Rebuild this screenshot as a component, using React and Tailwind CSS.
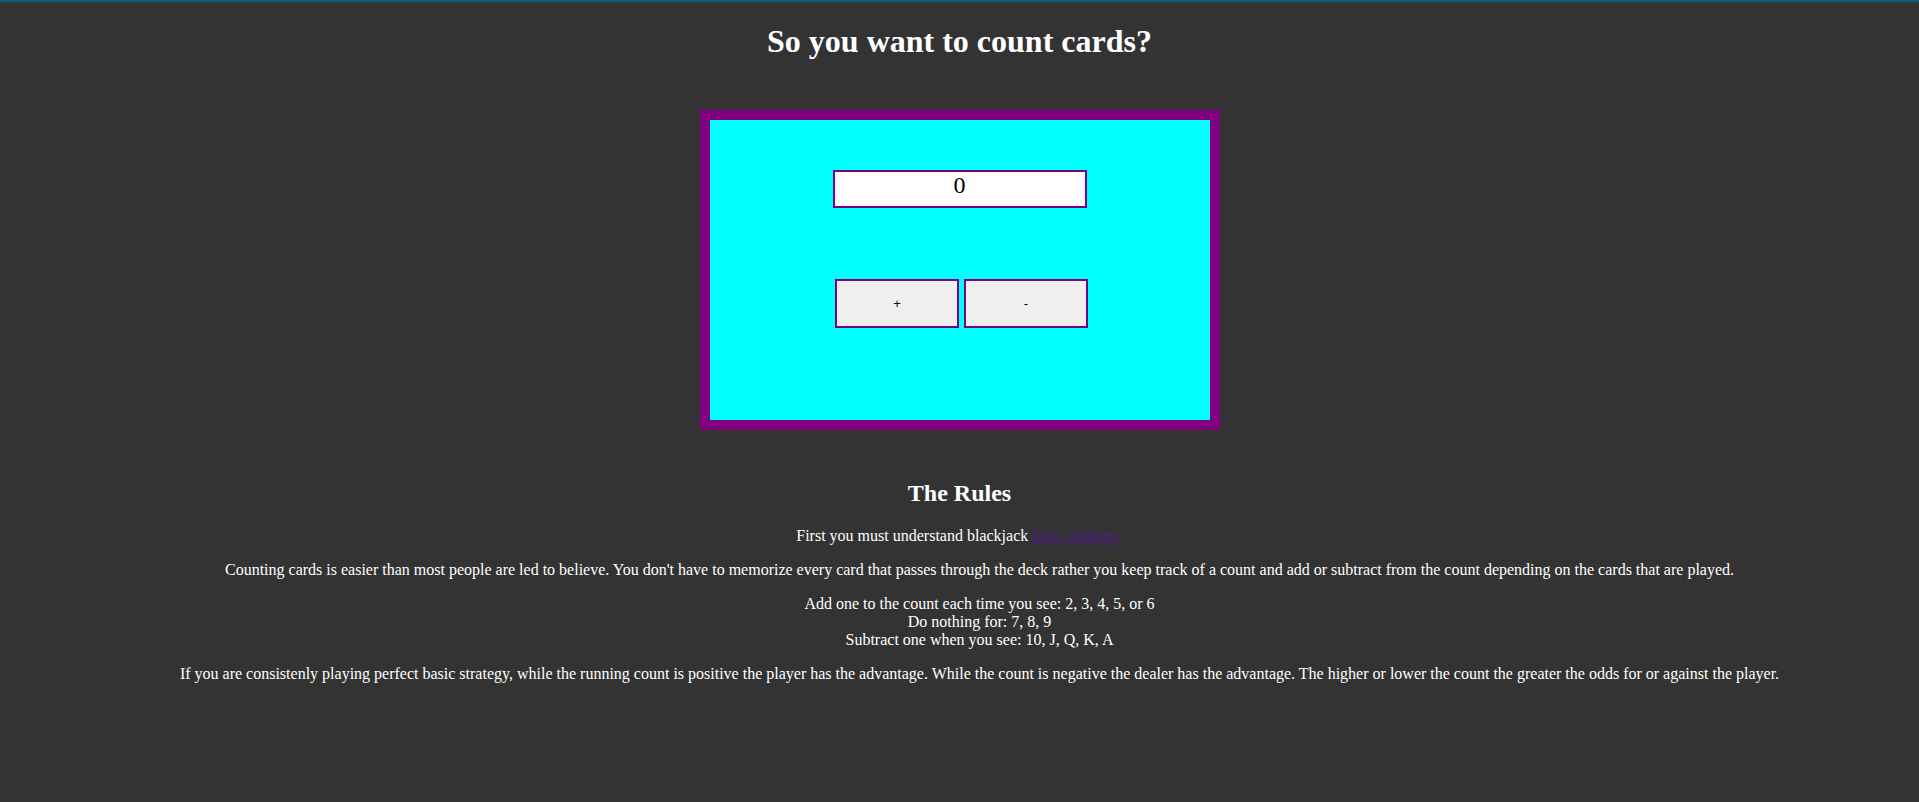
export default function App() {
  return (
    <div
      className="min-h-[802px] w-full bg-[#333333] border-t-2 border-[#0f5e78] text-white"
      style={{ fontFamily: '"Liberation Serif", "Times New Roman", serif' }}
    >
      <h1 className="mt-[21px] text-center text-[32px] font-bold leading-[37px]">
        So you want to count cards?
      </h1>

      <div className="mt-[50px] flex justify-center">
        <div className="flex h-[320px] w-[520px] flex-col items-center border-[10px] border-[#800080] bg-[#00ffff] pt-[50px]">
          <div className="h-[38px] w-[254px] border-2 border-[#800080] bg-white text-center text-[24px] leading-[27px] text-black">
            0
          </div>
          <div className="mt-[71px] flex gap-[5px] pl-[4px]">
            <button
              className="h-[49px] w-[124px] border-2 border-[#800080] bg-[#efefef] text-[13px] text-black"
              style={{ fontFamily: '"Liberation Sans", Arial, sans-serif' }}
            >
              +
            </button>
            <button
              className="h-[49px] w-[124px] border-2 border-[#800080] bg-[#efefef] text-[13px] text-black"
              style={{ fontFamily: '"Liberation Sans", Arial, sans-serif' }}
            >
              -
            </button>
          </div>
        </div>
      </div>

      <h2 className="mt-[49px] text-center text-[24px] font-bold leading-[28px]">
        The Rules
      </h2>

      <div className="text-center text-[16px] leading-[18px]">
        <p className="mt-[20px]">
          First you must understand blackjack{" "}
          <a href="#" className="text-[#551a8b] underline">
            basic strategy.
          </a>
        </p>
        <div className="pl-[40px]">
          <p className="mt-[16px]">
            Counting cards is easier than most people are led to believe. You don't have to memorize every card that passes through the deck rather you keep track of a count and add or subtract from the count depending on the cards that are played.
          </p>
          <p className="mt-[16px]">
            Add one to the count each time you see: 2, 3, 4, 5, or 6
            <br />
            Do nothing for: 7, 8, 9
            <br />
            Subtract one when you see: 10, J, Q, K, A
          </p>
          <p className="mt-[16px]">
            If you are consistenly playing perfect basic strategy, while the running count is positive the player has the advantage. While the count is negative the dealer has the advantage. The higher or lower the count the greater the odds for or against the player.
          </p>
        </div>
      </div>
    </div>
  );
}
